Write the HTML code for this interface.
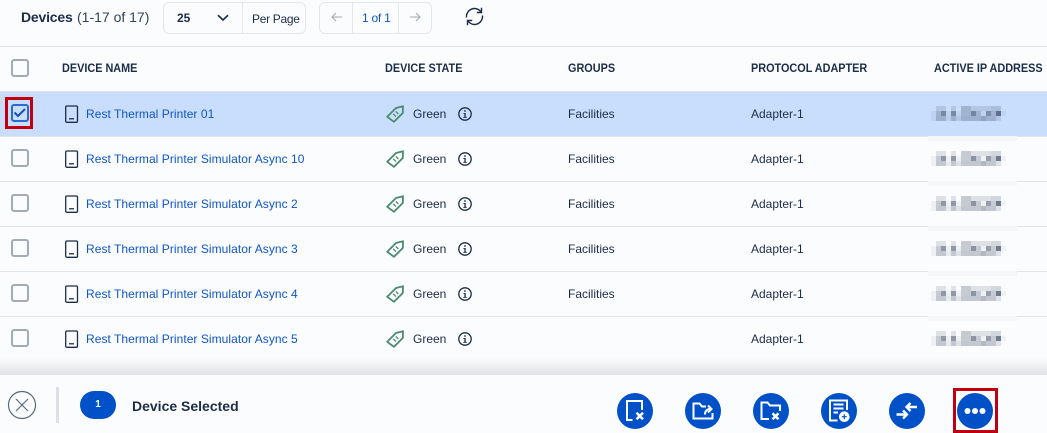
<!DOCTYPE html>
<html><head><meta charset="utf-8">
<style>
html,body{margin:0;padding:0}
body{width:1047px;height:433px;overflow:hidden;background:#fbfcfe;position:relative;font-family:"Liberation Sans",sans-serif;color:#1c2c47;font-size:12px}
.a{position:absolute;white-space:nowrap}
.t{line-height:16px}
.hd{font-weight:bold;font-size:12px;top:60px;line-height:16px;color:#1c2c47;transform-origin:left;transform:scaleX(.905)}
.ln{left:0;width:1047px;height:1px;background:#e0e3e8}
.cb{left:11px;width:14px;height:14px;border:2px solid #a3abb8;border-radius:3px}
.link{left:86px;color:#0f56c8;letter-spacing:.05px}
.st{left:413px}.gr{left:568px}.ad{left:751px}
.band{left:928px;width:89px;height:5px;background:#f5f6f7}
svg{position:absolute;overflow:visible}
.btn{top:393px;width:36px;height:36px;border-radius:50%;background:#0050c8}
</style></head><body>
<svg width="0" height="0" style="position:absolute">
<defs>
<g id="dev" fill="none" stroke="#1c2c47" stroke-width="1.3"><rect x=".7" y="1" width="11.800" height="16.300" rx="1.200"/><path d="M4 13.800h5"/></g>
<g id="tag" fill="none" stroke="#4a8a6e" stroke-width="1.800"><path d="M1.200 11.800 10 3 17 1.200 16.800 8 8 16.800 Z" stroke-linejoin="round"/><path d="M7.200 8.800 10 11.600M9.800 6.400 12.400 9" stroke-width="1.300"/></g>
<g id="inf"><circle cx="7" cy="7" r="6.200" fill="none" stroke="#1c2c47" stroke-width="1.300"/><rect x="6.400" y="6" width="1.300" height="4.600" fill="#1c2c47"/><rect x="5.400" y="6" width="2" height=".9" fill="#1c2c47"/><rect x="5.300" y="9.900" width="3.500" height=".9" fill="#1c2c47"/><circle cx="7" cy="4" r=".9" fill="#1c2c47"/></g>
<g id="ip">
<g fill="#1c2c47">
<rect x="5" y="0" width="10" height="5" opacity=".13"/><rect x="20" y="0" width="5" height="5" opacity=".13"/><rect x="30" y="0" width="10" height="5" opacity=".24"/><rect x="40" y="0" width="20" height="5" opacity=".13"/><rect x="60" y="0" width="10" height="5" opacity=".18"/>
<rect x="0" y="5" width="5" height="5" opacity=".06"/><rect x="5" y="5" width="5" height="5" opacity=".24"/><rect x="10" y="5" width="5" height="5" opacity=".48"/><rect x="15" y="5" width="5" height="5" opacity=".06"/><rect x="20" y="5" width="5" height="5" opacity=".48"/><rect x="25" y="5" width="5" height="5" opacity=".06"/><rect x="30" y="5" width="10" height="5" opacity=".24"/><rect x="40" y="5" width="5" height="5" opacity=".5"/><rect x="45" y="5" width="5" height="5" opacity=".24"/><rect x="50" y="5" width="5" height="5" opacity=".06"/><rect x="55" y="5" width="5" height="5" opacity=".45"/><rect x="60" y="5" width="5" height="5" opacity=".24"/><rect x="65" y="5" width="5" height="5" opacity=".62"/><rect x="70" y="5" width="5" height="5" opacity=".05"/>
<rect x="0" y="10" width="5" height="5" opacity=".06"/><rect x="5" y="10" width="10" height="5" opacity=".25"/><rect x="15" y="10" width="5" height="5" opacity=".09"/><rect x="20" y="10" width="5" height="5" opacity=".25"/><rect x="25" y="10" width="5" height="5" opacity=".13"/><rect x="30" y="10" width="20" height="5" opacity=".25"/><rect x="50" y="10" width="5" height="5" opacity=".32"/><rect x="55" y="10" width="10" height="5" opacity=".25"/><rect x="65" y="10" width="5" height="5" opacity=".13"/>
</g></g>
</defs></svg>

<div class="a t" style="left:21px;top:9px;font-size:14px"><b style="letter-spacing:-.2px">Devices</b></div>
<div class="a t" style="left:77px;top:9px;font-size:14px;color:#33415a">(1-17 of 17)</div>

<div class="a" style="left:163px;top:2px;width:141px;height:30px;border:1px solid #e3e6eb;border-radius:6px"></div>
<div class="a" style="left:242px;top:3px;width:1px;height:30px;background:#e3e6eb"></div>
<div class="a t" style="left:177px;top:10px;font-size:12px;font-weight:bold;color:#1c2c47">25</div>
<svg style="left:217px;top:14px" width="12" height="8"><path d="M1 1.200 6 6 11 1.200" fill="none" stroke="#1c2c47" stroke-width="1.700"/></svg>
<div class="a t" style="left:252px;top:11px;font-size:12px;letter-spacing:-.3px">Per Page</div>

<div class="a" style="left:319px;top:2px;width:111px;height:30px;border:1px solid #e3e6eb;border-radius:6px"></div>
<div class="a" style="left:352px;top:3px;width:1px;height:30px;background:#e3e6eb"></div>
<div class="a" style="left:398px;top:3px;width:1px;height:30px;background:#e3e6eb"></div>
<svg style="left:331px;top:12px" width="12" height="10"><path d="M11 5H1M5 1 1 5l4 4" fill="none" stroke="#a3abb8" stroke-width="1.100"/></svg>
<svg style="left:409px;top:12px" width="12" height="10"><path d="M1 5h10M7 1l4 4-4 4" fill="none" stroke="#a3abb8" stroke-width="1.100"/></svg>
<div class="a t" style="left:362px;top:10px;font-size:12px;color:#0f56c8;letter-spacing:-.25px">1 of 1</div>
<svg style="left:465px;top:7px" width="19" height="19" fill="none" stroke="#1c2c47" stroke-width="1.400"><path d="M1.500 10.500C1 5.500 5 1.500 9.500 1.500c3 0 5 1.400 6.500 3.500"/><path d="M16.500 .8V5.500H11.800"/><path d="M17.500 8.500C18 13.500 14 17.500 9.500 17.500c-3 0-5-1.400-6.500-3.500"/><path d="M2.500 18.200V13.500H7.200"/></svg>

<div class="a ln" style="top:46px"></div>
<div class="a cb" style="top:59px"></div>
<div class="a hd" style="left:62px">DEVICE NAME</div>
<div class="a hd" style="left:385px">DEVICE STATE</div>
<div class="a hd" style="left:568px">GROUPS</div>
<div class="a hd" style="left:751px">PROTOCOL ADAPTER</div>
<div class="a hd" style="left:934px">ACTIVE IP ADDRESS</div>

<div class="a" style="left:0;top:91px;width:1047px;height:45px;background:#c9defc;border-top:1px solid #e0e3e8;box-sizing:border-box"></div>
<div class="a ln" style="top:136px"></div><div class="a ln" style="top:181px"></div><div class="a ln" style="top:226px"></div><div class="a ln" style="top:271px"></div><div class="a ln" style="top:316px"></div>
<div class="a band" style="top:136px"></div><div class="a band" style="top:181px"></div><div class="a band" style="top:226px"></div><div class="a band" style="top:271px"></div><div class="a band" style="top:316px"></div>

<div class="a" style="left:5px;top:97px;width:22px;height:26px;border:3px solid #c00010"></div>
<div class="a" style="left:11px;top:104px;width:14px;height:14px;border:2px solid #2c6ad0;border-radius:3px"></div>
<svg style="left:13px;top:106px" width="14" height="14"><path d="M1.500 6.500 5 10 12 3" fill="none" stroke="#1150c4" stroke-width="2"/></svg>

<div class="a cb" style="top:149px"></div><div class="a cb" style="top:194px"></div><div class="a cb" style="top:239px"></div><div class="a cb" style="top:284px"></div><div class="a cb" style="top:329px"></div>

<svg style="left:65px;top:105px" width="13" height="18"><use href="#dev"/></svg>
<svg style="left:65px;top:150px" width="13" height="18"><use href="#dev"/></svg>
<svg style="left:65px;top:195px" width="13" height="18"><use href="#dev"/></svg>
<svg style="left:65px;top:240px" width="13" height="18"><use href="#dev"/></svg>
<svg style="left:65px;top:285px" width="13" height="18"><use href="#dev"/></svg>
<svg style="left:65px;top:330px" width="13" height="18"><use href="#dev"/></svg>

<div class="a t link" style="top:106px">Rest Thermal Printer 01</div>
<div class="a t link" style="top:151px">Rest Thermal Printer Simulator Async 10</div>
<div class="a t link" style="top:196px">Rest Thermal Printer Simulator Async 2</div>
<div class="a t link" style="top:241px">Rest Thermal Printer Simulator Async 3</div>
<div class="a t link" style="top:286px">Rest Thermal Printer Simulator Async 4</div>
<div class="a t link" style="top:331px">Rest Thermal Printer Simulator Async 5</div>

<svg style="left:386px;top:105px" width="18" height="18"><use href="#tag"/></svg>
<svg style="left:386px;top:150px" width="18" height="18"><use href="#tag"/></svg>
<svg style="left:386px;top:195px" width="18" height="18"><use href="#tag"/></svg>
<svg style="left:386px;top:240px" width="18" height="18"><use href="#tag"/></svg>
<svg style="left:386px;top:285px" width="18" height="18"><use href="#tag"/></svg>
<svg style="left:386px;top:330px" width="18" height="18"><use href="#tag"/></svg>

<div class="a t st" style="top:106px">Green</div><div class="a t st" style="top:151px">Green</div><div class="a t st" style="top:196px">Green</div><div class="a t st" style="top:241px">Green</div><div class="a t st" style="top:286px">Green</div><div class="a t st" style="top:331px">Green</div>

<svg style="left:458px;top:107px" width="14" height="14"><use href="#inf"/></svg>
<svg style="left:458px;top:152px" width="14" height="14"><use href="#inf"/></svg>
<svg style="left:458px;top:197px" width="14" height="14"><use href="#inf"/></svg>
<svg style="left:458px;top:242px" width="14" height="14"><use href="#inf"/></svg>
<svg style="left:458px;top:287px" width="14" height="14"><use href="#inf"/></svg>
<svg style="left:458px;top:332px" width="14" height="14"><use href="#inf"/></svg>

<div class="a t gr" style="top:106px">Facilities</div><div class="a t gr" style="top:151px">Facilities</div><div class="a t gr" style="top:196px">Facilities</div><div class="a t gr" style="top:241px">Facilities</div><div class="a t gr" style="top:286px">Facilities</div>

<div class="a t ad" style="top:106px">Adapter-1</div><div class="a t ad" style="top:151px">Adapter-1</div><div class="a t ad" style="top:196px">Adapter-1</div><div class="a t ad" style="top:241px">Adapter-1</div><div class="a t ad" style="top:286px">Adapter-1</div><div class="a t ad" style="top:331px">Adapter-1</div>

<svg style="left:931px;top:106px" width="75" height="15"><use href="#ip"/></svg>
<svg style="left:931px;top:151px" width="75" height="15"><use href="#ip"/></svg>
<svg style="left:931px;top:196px" width="75" height="15"><use href="#ip"/></svg>
<svg style="left:931px;top:241px" width="75" height="15"><use href="#ip"/></svg>
<svg style="left:931px;top:286px" width="75" height="15"><use href="#ip"/></svg>
<svg style="left:931px;top:331px" width="75" height="15"><use href="#ip"/></svg>

<div class="a" style="left:0;top:358px;width:1047px;height:17px;background:linear-gradient(#fbfcfe00,#e1e2e5)"></div>
<div class="a" style="left:0;top:375px;width:1047px;height:58px;background:#fbfcfe"></div>

<svg style="left:8px;top:391px" width="28" height="28" fill="none" stroke="#5a6a80" stroke-width="1.200"><circle cx="14" cy="14" r="13.500"/><path d="M8 8 20 20M20 8 8 20"/></svg>
<div class="a" style="left:56px;top:387px;width:3px;height:36px;background:#dcdfe5"></div>
<div class="a" style="left:80px;top:391px;width:36px;height:28px;border-radius:14px;background:#0050c8;color:#fff;font-size:10px;font-weight:bold;line-height:28px;text-align:center">1</div>
<div class="a t" style="left:132px;top:398px;font-size:14px;font-weight:bold;color:#1c2c47">Device Selected</div>

<div class="a btn" style="left:617px"><svg width="36" height="36" fill="none" stroke="#fff" stroke-width="2"><path d="M15.500 27H10V8h15v9"/><path d="M19.500 19.800l6.500 6.500M26 19.800l-6.500 6.500" stroke-width="2.500"/></svg></div>
<div class="a btn" style="left:685px"><svg width="36" height="36" fill="none" stroke="#fff" stroke-width="2"><path d="M27.500 20v5.500H8.500V10.500h6l2.500 3h4"/><path d="M20 21.500c0-3.500 2-5.500 5.500-5.500" stroke-width="2"/><path d="M23 12.500l3.500 3.500-3.500 3.500" stroke-width="2"/></svg></div>
<div class="a btn" style="left:753px"><svg width="36" height="36" fill="none" stroke="#fff" stroke-width="2"><path d="M16 26H8.500V9.500h6l2.500 3h10v5.500"/><path d="M19.500 20.200l6 6M25.500 20.200l-6 6" stroke-width="2.500"/></svg></div>
<div class="a btn" style="left:821px"><svg width="36" height="36" fill="none" stroke="#fff" stroke-width="2"><path d="M16.500 27.500H9V7.500h17v9.500"/><path d="M12.500 11.500h10M12.500 15.500h10M12.500 19.500h4.500"/><circle cx="23.300" cy="23.700" r="5.300" fill="#fff" stroke="none"/><path d="M20.800 23.700h5M23.300 21.200v5" stroke="#0050c8" stroke-width="1.200"/></svg></div>
<div class="a btn" style="left:889px"><svg width="36" height="36" fill="none" stroke="#fff" stroke-width="2.400"><path d="M28 14H18M21.500 10l-4 4 4 4"/><path d="M7.500 21.500h10M14 17.500l4 4-4 4"/></svg></div>
<div class="a btn" style="left:957px"><svg width="36" height="36" fill="#fff"><circle cx="10.500" cy="18" r="3"/><circle cx="18" cy="18" r="3"/><circle cx="25.500" cy="18" r="3"/></svg></div>
<div class="a" style="left:953px;top:388px;width:39px;height:39px;border:3px solid #c00010"></div>
</body></html>
